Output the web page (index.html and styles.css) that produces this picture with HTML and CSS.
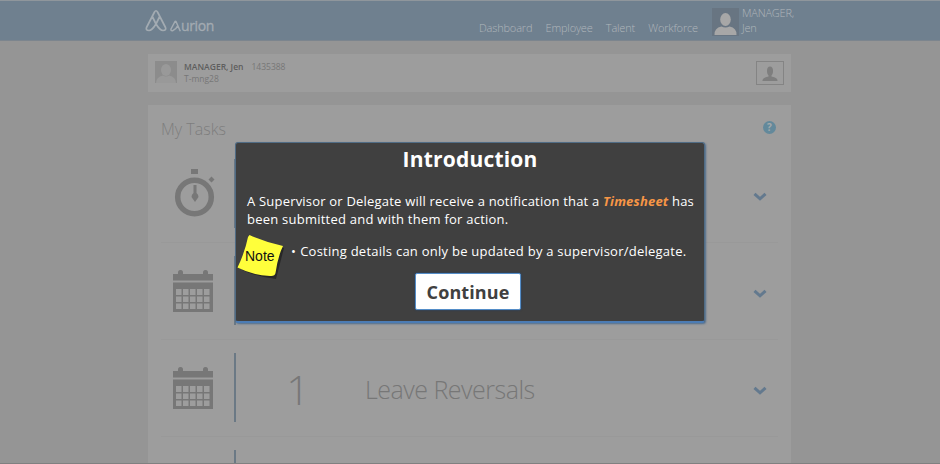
FILE: index.html
```html
<!DOCTYPE html>
<html lang="en">
<head>
<meta charset="utf-8">
<title>Aurion</title>
<link rel="stylesheet" href="styles.css">
</head>
<body>
<svg class="defs" aria-hidden="true">
  <symbol id="calendar" viewBox="0 0 42 44">
    <path fill="#777" d="M1 5H6Q5.500 1 8.500 1T11 5H31Q30.500 1 33.500 1T36 5H41V11.500H1ZM1 13.500H41V43H1Z"/>
    <path fill="#9d9d9d" d="M4 20h5.500v6H4zm7 0h5.500v6H11zm7 0h5.500v6H18zm7 0h5.500v6H25zm7 0h5.500v6H32zM4 27.500h5.500v5.500H4zm7 0h5.500v5.500H11zm7 0h5.500v5.500H18zm7 0h5.500v5.500H25zm7 0h5.500v5.500H32zM4 34.500h5.500v5.500H4zm7 0h5.500v5.500H11zm7 0h5.500v5.500H18zm7 0h5.500v5.500H25zm7 0h5.500v5.500H32z"/>
  </symbol>
  <symbol id="chevron" viewBox="0 0 14 10"><path d="M1.500 1.800 7 6.800l5.500-5" fill="none" stroke="#63798e" stroke-width="3"/></symbol>
</svg>
<header class="topbar">
  <div class="topbar-inner">
    <div class="brand">
      <svg width="22" height="24" viewBox="0 0 22 24" fill="none" stroke="#a3abb2" stroke-width="1.700" stroke-linejoin="round" stroke-linecap="round"><path d="M11 15 7.300 7.500 9.500 3Q11 .5 12.500 3L20.500 18.500Q21.500 21.500 18 21.500 15 21.500 11 15ZM11 15 14.700 7.500 12.500 3M9.500 3 1.500 18.500Q.5 21.500 4 21.500 7 21.500 11 15"/></svg>
      <svg class="brand-a" width="11" height="12" viewBox="0 0 11 12" fill="none" stroke="#a3abb2" stroke-width="1.500" stroke-linejoin="round"><path d="M10.300 11.200 6 1.500Q5.500.8 5 1.500L1 9Q.5 11.200 3 10.500 6 9.500 7.500 6"/></svg><span class="wordmark">urion</span>
    </div>
    <nav class="nav"><span>Dashboard</span><span>Employee</span><span>Talent</span><span>Workforce</span></nav>
    <svg class="avatar" width="27" height="28" viewBox="0 0 27 28"><path fill="#687582" d="M0 0h27v28H0z"/><ellipse cx="13.500" cy="11.500" rx="5.300" ry="6.500" fill="#a7a7a7"/><path fill="#a7a7a7" d="M2.500 27Q2 20 9.500 18.500q4 2 8 0Q25 20 24.500 27z"/></svg>
    <div class="user">MANAGER,<br>Jen</div>
  </div>
</header>
<main class="page">
  <section class="card person">
    <svg width="22" height="22" viewBox="0 0 22 22"><path fill="#8c8c8c" d="M0 0h22v22H0z"/><ellipse cx="11" cy="9" rx="5" ry="6" fill="#999"/><path fill="#999" d="M1 22q0-6 7-7.500 3 2 6 0Q21 16 21 22z"/></svg>
    <div class="person-text"><div><b>MANAGER, Jen</b><span class="pid">1435388</span></div><div>T-mng28</div></div>
    <div class="person-btn"><svg width="16" height="15" viewBox="0 0 16 15" fill="#7e7e7e"><ellipse cx="8" cy="5" rx="3" ry="4.500"/><path d="M6.500 8h3v2.500Q16 11.500 15.500 15H.5Q0 11.500 6.500 10.500z"/></svg></div>
  </section>
  <section class="card tasks">
    <div class="tasks-head"><h2>My Tasks</h2><span class="help">?</span></div>
    <div class="row">
      <svg class="icon timer" width="42" height="50" viewBox="0 0 42 50" fill="#777"><path d="M18 0h7v5h-7zM38.500 7.500l3 3-3 3-3-3z"/><circle cx="21.500" cy="28" r="16.800" fill="none" stroke="#777" stroke-width="5.500"/><path d="M20.500 16h3v8q2 1.500 2 4L22 33l-3.500-5q0-2.500 2-4z"/></svg>
      <div class="rule"></div><div class="count"></div><div class="label"></div>
      <svg class="chev" width="14" height="10"><use href="#chevron"/></svg>
    </div>
    <div class="row">
      <svg class="icon" width="42" height="44"><use href="#calendar"/></svg>
      <div class="rule"></div><div class="count"></div><div class="label"></div>
      <svg class="chev" width="14" height="10"><use href="#chevron"/></svg>
    </div>
    <div class="row">
      <svg class="icon" width="42" height="44"><use href="#calendar"/></svg>
      <div class="rule"></div><div class="count">1</div><div class="label">Leave Reversals</div>
      <svg class="chev" width="14" height="10"><use href="#chevron"/></svg>
    </div>
    <div class="row"><div class="icon"></div><div class="rule"></div></div>
  </section>
</main>
<div class="dialog">
  <h1>Introduction</h1>
  <p class="msg"><span class="line1">A Supervisor or Delegate will receive a notification that a <em>Timesheet</em> has</span><br><span class="line2">been submitted and with them for action.</span></p>
  <div class="note">
    <svg class="sticky" width="50" height="48" viewBox="0 0 50 48"><path fill="#272727" d="M15 4 47 14 39 45Q20 43 5 36Z"/><path fill="#ffff3b" d="M12.500 1Q28 8 46 12 41 22 38.500 39 38 42.500 33 42 15 41 .5 33.500 8 18 11 3Z"/><text x="8" y="27" class="sticky-text">Note</text></svg>
    <p><span class="bullet">•</span>Costing details can only be updated by a supervisor/delegate.</p>
  </div>
  <button>Continue</button>
</div>
</body>
</html>
```

FILE: styles.css
```css
* { box-sizing: border-box; }
body { margin: 0; height: 464px; overflow: hidden; background: #959595; font-family: "Open Sans", sans-serif; color: #777; border-bottom: 1px solid #808080; }
h1, h2, p { margin: 0; }
.defs { position: absolute; width: 0; height: 0; }
.topbar { height: 41px; background: #6f808f; border-top: 1px solid #8f969c; border-bottom: 1px solid #7c858e; }
.topbar-inner { width: 652px; margin-left: 144px; height: 39px; display: flex; }
.brand { width: 335px; padding: 8px 0 0 1px; display: flex; align-items: flex-start; color: #a3abb2; }
.brand-a { margin: 10.500px 0 0 3px; }
.wordmark { font-size: 14px; line-height: 20px; margin-top: 7px; letter-spacing: -.4px; -webkit-text-stroke: .3px #a3abb2; }
.nav { width: 233px; display: flex; gap: 13.300px; padding-top: 19px; font-size: 11px; line-height: 15px; letter-spacing: -.18px; font-weight: 300; color: #b0b6bb; white-space: nowrap; }
.avatar { margin-top: 7px; flex: none; }
.user { margin: 5px 0 0 3px; font-size: 11px; line-height: 14.500px; font-weight: 300; letter-spacing: -.2px; color: #b0b6bb; }
.page { width: 643px; margin-left: 148px; padding-top: 13px; }
.card { background: #9d9d9d; }
.person { height: 38px; display: flex; padding: 7px 7px 0 7px; }
.person-text { margin: 0 0 0 7px; font-size: 8.500px; line-height: 11.500px; flex: 1; color: #777; }
.person-text b { color: #5e5e5e; font-weight: 600; }
.pid { margin-left: 8px; }
.person-btn { width: 28px; height: 24px; border: 1px solid #848484; display: flex; align-items: center; justify-content: center; }
.tasks { margin-top: 13px; height: 359px; overflow: hidden; padding: 0 13px; }
.tasks-head { height: 41px; display: flex; justify-content: space-between; }
.tasks-head h2 { font-size: 16px; line-height: 24px; margin-top: 12px; font-weight: 300; color: #7d7d7d; }
.help { width: 13px; height: 13px; margin: 16px 2px 0 0; border-radius: 50%; background: #63899b; color: #a4a9ac; font-size: 10px; line-height: 13px; font-weight: 700; text-align: center; }
.row { height: 97px; display: flex; align-items: center; padding: 2px 0 0 11px; border-bottom: 1px solid #999; }
.icon { width: 42px; flex: none; margin-bottom: 2px; }
.timer { margin: 0 -1px 2px 1px; }
.rule { width: 2px; height: 69px; margin: 0 0 3px 20px; background: #6b7985; flex: none; }
.count { width: 129px; padding-right: 5px; font-size: 41px; line-height: 60px; font-weight: 300; text-align: center; flex: none; }
.label { flex: 1; font-size: 25px; font-weight: 300; letter-spacing: -.5px; }
.chev { margin: 4px 11px 0 0; }
.dialog { position: absolute; left: 235px; top: 142px; width: 470px; height: 181px; background: #404040; border: 1px solid #506c85; border-bottom: 2px solid #4c7cb4; border-radius: 3px; box-shadow: 1px 1px 2px #4e6d8e; color: #fff; }
.dialog h1 { margin-top: 2px; font-size: 21px; line-height: 28px; letter-spacing: .2px; text-align: center; }
.msg { margin: 19px 0 0 11px; font-size: 13px; line-height: 18px; white-space: nowrap; }
.msg em { color: #f79646; font-weight: 700; }
.line1 { letter-spacing: .2px; }
.line2 { letter-spacing: .24px; }
.note { display: flex; height: 48px; margin-top: 5px; padding-left: 1px; }
.sticky { flex: none; position: relative; top: 1px; }
.sticky-text { font: 14px "Liberation Sans", sans-serif; fill: #111; }
.note p { margin: 9px 0 0 4px; font-size: 13px; line-height: 18px; letter-spacing: .25px; white-space: nowrap; }
.bullet { margin-right: 4px; }
.dialog button { display: block; width: 106px; height: 37px; margin: -8px 0 0 179px; padding: 1px 0 0; border: 1px solid #548dc8; border-radius: 2px; background: #fff; color: #404040; font: 700 18px/35px "Open Sans", sans-serif; letter-spacing: .1px; box-shadow: 0 0 2px #1f497d; position: relative; }
```
